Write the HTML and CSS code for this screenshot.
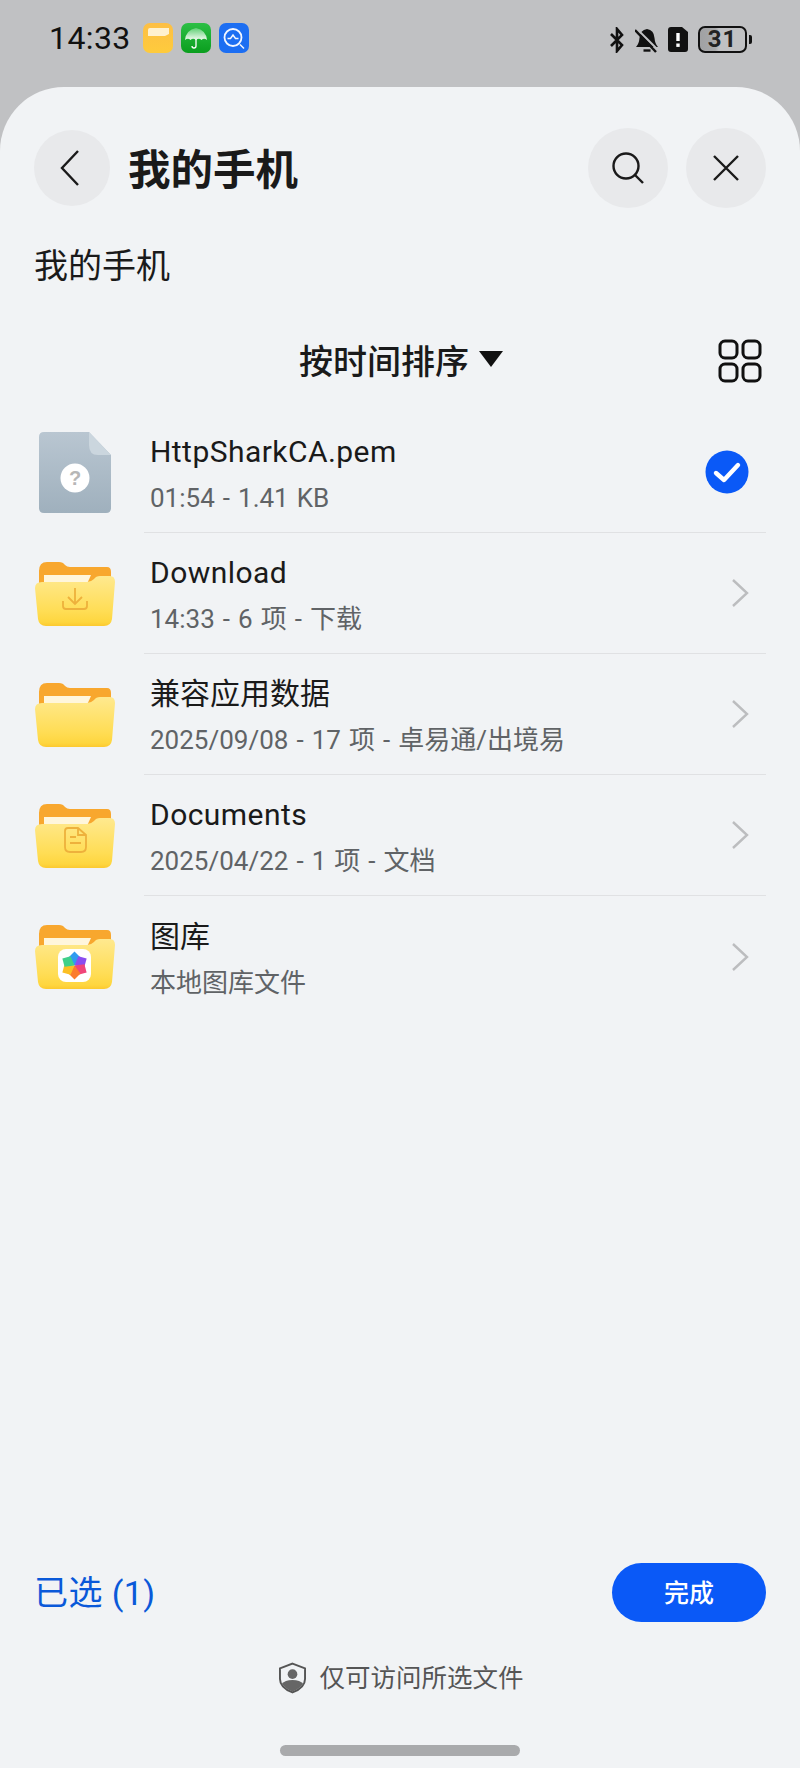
FILE: index.html
```html
<!DOCTYPE html>
<html lang="zh-CN">
<head>
  <meta charset="UTF-8">
  <title>我的手机</title>
  <link rel="stylesheet" href="styles.css">
</head>
<body>
  <svg class="defs" width="0" height="0">
    <defs>
      <linearGradient id="folder-front" x1="0" y1="0" x2="0" y2="1">
        <stop offset="0" stop-color="#ffe98f"/>
        <stop offset="0.7" stop-color="#ffdd55"/>
        <stop offset="0.92" stop-color="#fed63f"/>
        <stop offset="1" stop-color="#fcc92f"/>
      </linearGradient>
      <linearGradient id="file-body" x1="0" y1="0" x2="0" y2="1">
        <stop offset="0" stop-color="#b9c6d1"/>
        <stop offset="1" stop-color="#9fb0bd"/>
      </linearGradient>
      <linearGradient id="app-yellow" x1="0" y1="0" x2="0" y2="1">
        <stop offset="0" stop-color="#fdbf45"/>
        <stop offset="1" stop-color="#fecb3c"/>
      </linearGradient>
      <linearGradient id="app-green" x1="0" y1="0" x2="0" y2="1">
        <stop offset="0" stop-color="#2cbf45"/>
        <stop offset="1" stop-color="#0a9e1e"/>
      </linearGradient>
      <linearGradient id="umbrella" x1="0" y1="0" x2="0" y2="1">
        <stop offset="0" stop-color="#5fcf74"/>
        <stop offset="1" stop-color="#f1fbf1"/>
      </linearGradient>
      <symbol id="folder" viewBox="0 0 80 66">
        <path d="M4 10 Q4 1 12 1 H24 Q28 1 30 4 Q32 6 35 6 H72 Q76 6 76 11 V30 H4 Z" fill="#f8a72e"/>
        <path d="M9 14 H56 L52 23 H9 Z" fill="#fff6dc"/>
        <path d="M7 21 H52 Q56 21 59 18 Q61 15 65 15 H75 Q80 15 80 21 L77 58 Q76 65 69 65 H11 Q4 65 3 58 L0 27 Q0 21 7 21 Z" fill="url(#folder-front)"/>
      </symbol>
    </defs>
  </svg>

  <div class="status-bar">
    <span class="clock">14:33</span>
    <div class="app-icons">
      <svg class="app-icon" viewBox="0 0 30 30">
        <rect width="30" height="30" rx="7" fill="url(#app-yellow)"/>
        <path d="M5 7 Q5 5 7 5 H26 V11 L22 13 H5 Z" fill="#fff1cf"/>
      </svg>
      <svg class="app-icon" viewBox="0 0 30 30">
        <rect width="30" height="30" rx="7" fill="url(#app-green)"/>
        <path d="M4 17 Q5 7 15 5 Q25 7 26 17 Q23 14.5 20.5 17 Q18 14.5 15 17 Q12 14.5 9.5 17 Q7 14.5 4 17 Z" fill="url(#umbrella)"/>
        <path d="M15 16 V23 Q15 25 13 25 Q11 25 11 23" fill="none" stroke="#fff" stroke-width="1.3"/>
      </svg>
      <svg class="app-icon" viewBox="0 0 30 30">
        <rect width="30" height="30" rx="7" fill="#1c6ef2"/>
        <circle cx="14" cy="14.5" r="8.5" fill="none" stroke="#f2f6ff" stroke-width="1.8"/>
        <path d="M21 21.5 L25 25.5 M8.5 15.5 L11.5 15.5 L14 12 L16.5 15.5 L19.5 15.5" fill="none" stroke="#f2f6ff" stroke-width="1.5"/>
      </svg>
    </div>
    <div class="status-right">
      <svg class="bt-icon" viewBox="0 0 16 26">
        <path d="M2 7 L13 18 L8 24 V2 L13 8 L2 19" fill="none" stroke="#111" stroke-width="2.6"/>
      </svg>
      <svg class="bell-icon" viewBox="0 0 24 26">
        <path d="M1 20 Q4 17 4.5 11 Q5 3 12 2 Q19 3 19.5 11 Q20 17 23 20 Z" fill="#111"/>
        <path d="M8.5 23.5 H15.5" stroke="#111" stroke-width="2.4"/>
        <path d="M2 2 L24 24" stroke="#c0c1c3" stroke-width="2"/>
        <path d="M0 3 L21 25" stroke="#111" stroke-width="2.4"/>
      </svg>
      <svg class="sim-icon" viewBox="0 0 20 25">
        <path d="M3 0 H14 L20 5 V22 Q20 25 17 25 H3 Q0 25 0 22 V3 Q0 0 3 0 Z" fill="#111"/>
        <rect x="8.3" y="6" width="3.4" height="8" fill="#fff"/>
        <rect x="8.3" y="16.5" width="3.4" height="3.4" fill="#fff"/>
      </svg>
      <div class="battery">
        <div class="battery-body">31</div>
        <span class="battery-tip"></span>
      </div>
    </div>
  </div>

  <main class="sheet">
    <header class="top-bar">
      <button class="round-btn back-btn">
        <svg width="20" height="36" viewBox="0 0 20 36"><path d="M18 1 L2 18 L18 35" fill="none" stroke="#1a1a1a" stroke-width="2.4"/></svg>
      </button>
      <h1 class="title">我的手机</h1>
      <button class="round-btn">
        <svg width="34" height="34" viewBox="0 0 34 34"><circle cx="15" cy="15" r="12.5" fill="none" stroke="#1a1a1a" stroke-width="2.4"/><path d="M24 24 L32 32" stroke="#1a1a1a" stroke-width="2.4"/></svg>
      </button>
      <button class="round-btn">
        <svg width="28" height="28" viewBox="0 0 28 28"><path d="M2 2 L26 26 M26 2 L2 26" stroke="#1a1a1a" stroke-width="2.4"/></svg>
      </button>
    </header>

    <div class="crumb">我的手机</div>

    <div class="sort-bar">
      <div class="sort">
        <span>按时间排序</span>
        <span class="sort-arrow"></span>
      </div>
      <svg class="grid-icon" width="44" height="44" viewBox="0 0 44 44">
        <g fill="none" stroke="#111" stroke-width="3">
          <rect x="2" y="2" width="17" height="17" rx="5"/>
          <rect x="25" y="2" width="17" height="17" rx="5"/>
          <rect x="2" y="25" width="17" height="17" rx="5"/>
          <rect x="25" y="25" width="17" height="17" rx="5"/>
        </g>
      </svg>
    </div>

    <ul class="file-list">
      <li class="file-row">
        <div class="file-icon">
          <svg class="doc" width="72" height="81" viewBox="0 0 72 81">
            <path d="M5 0 H50 L72 23 V76 Q72 81 67 81 H5 Q0 81 0 76 V5 Q0 0 5 0 Z" fill="url(#file-body)"/>
            <path d="M50 0 L72 23 H59 Q50 23 50 13 Z" fill="#cbd6de"/>
            <circle cx="36" cy="46" r="14.5" fill="#fff"/>
            <text x="36" y="53" class="file-mark">?</text>
          </svg>
        </div>
        <div class="file-body">
          <div class="file-text">
            <div class="file-name latin">HttpSharkCA.pem</div>
            <div class="file-meta">01:54 - 1.41 KB</div>
          </div>
          <svg class="check" width="44" height="44" viewBox="0 0 44 44">
            <circle cx="22" cy="22" r="21.5" fill="#0a59f7"/>
            <path d="M11 23 L19 30 L33 15" fill="none" stroke="#fff" stroke-width="4.4" stroke-linecap="round" stroke-linejoin="round"/>
          </svg>
        </div>
      </li>
      <li class="file-row">
        <div class="file-icon">
          <svg class="folder" viewBox="0 0 80 66">
            <use href="#folder"/>
            <path d="M40 27 V42 M33 36 L40 43 L47 36 M28 40 V45 Q28 48 31 48 H49 Q52 48 52 45 V40" fill="none" stroke="#eeb13c" stroke-width="1.8"/>
          </svg>
        </div>
        <div class="file-body">
          <div class="file-text">
            <div class="file-name latin">Download</div>
            <div class="file-meta">14:33 - 6 项 - 下载</div>
          </div>
          <svg class="chevron" width="18" height="28" viewBox="0 0 18 28"><path d="M2 1 L16 14 L2 27" fill="none" stroke="#bcbdbf" stroke-width="2.4"/></svg>
        </div>
      </li>
      <li class="file-row">
        <div class="file-icon">
          <svg class="folder" viewBox="0 0 80 66"><use href="#folder"/></svg>
        </div>
        <div class="file-body">
          <div class="file-text">
            <div class="file-name">兼容应用数据</div>
            <div class="file-meta">2025/09/08 - 17 项 - 卓易通/出境易</div>
          </div>
          <svg class="chevron" width="18" height="28" viewBox="0 0 18 28"><path d="M2 1 L16 14 L2 27" fill="none" stroke="#bcbdbf" stroke-width="2.4"/></svg>
        </div>
      </li>
      <li class="file-row">
        <div class="file-icon">
          <svg class="folder" viewBox="0 0 80 66">
            <use href="#folder"/>
            <path d="M33 25 H43 L51 32 V44 Q51 49 46 49 H35 Q30 49 30 44 V28 Q30 25 33 25 Z M43 25 V32 H51 M35 34 H41 M35 40 H46" fill="none" stroke="#eeb13c" stroke-width="1.8"/>
          </svg>
        </div>
        <div class="file-body">
          <div class="file-text">
            <div class="file-name latin">Documents</div>
            <div class="file-meta">2025/04/22 - 1 项 - 文档</div>
          </div>
          <svg class="chevron" width="18" height="28" viewBox="0 0 18 28"><path d="M2 1 L16 14 L2 27" fill="none" stroke="#bcbdbf" stroke-width="2.4"/></svg>
        </div>
      </li>
      <li class="file-row">
        <div class="file-icon">
          <svg class="folder" viewBox="0 0 80 66">
            <use href="#folder"/>
            <rect x="23" y="25" width="33" height="33" rx="8" fill="#fff"/>
            <g transform="translate(39.5 41.5)">
              <path d="M0 0 L-6 -8 L0 -14 L6 -8 Z" fill="#2f9bf0"/>
              <path d="M0 0 L-6 -8 L0 -14 L6 -8 Z" fill="#8a4df0" transform="rotate(60)"/>
              <path d="M0 0 L-6 -8 L0 -14 L6 -8 Z" fill="#f0457a" transform="rotate(120)"/>
              <path d="M0 0 L-6 -8 L0 -14 L6 -8 Z" fill="#fb7c2c" transform="rotate(180)"/>
              <path d="M0 0 L-6 -8 L0 -14 L6 -8 Z" fill="#fbbf24" transform="rotate(240)"/>
              <path d="M0 0 L-6 -8 L0 -14 L6 -8 Z" fill="#3fd08a" transform="rotate(300)"/>
            </g>
          </svg>
        </div>
        <div class="file-body no-line">
          <div class="file-text">
            <div class="file-name">图库</div>
            <div class="file-meta">本地图库文件</div>
          </div>
          <svg class="chevron" width="18" height="28" viewBox="0 0 18 28"><path d="M2 1 L16 14 L2 27" fill="none" stroke="#bcbdbf" stroke-width="2.4"/></svg>
        </div>
      </li>
    </ul>

    <div class="spacer"></div>

    <div class="action-bar">
      <span class="picked">已选 (1)</span>
      <button class="done-btn">完成</button>
    </div>

    <div class="notice">
      <svg width="27" height="32" viewBox="0 0 28 32">
        <path d="M14 1 L27 6 V17 Q27 26 14 31 Q1 26 1 17 V6 Z" fill="none" stroke="#555" stroke-width="2"/>
        <circle cx="14" cy="12" r="5" fill="#666"/>
        <path d="M3 22 Q6 18 14 18 Q22 18 25 22 Q22 27 14 30 Q6 27 3 22 Z" fill="#666"/>
      </svg>
      <span>仅可访问所选文件</span>
    </div>

    <div class="home-bar"></div>
  </main>
</body>
</html>
```

FILE: styles.css
```css
* {
  box-sizing: border-box;
}
html, body {
  margin: 0;
  padding: 0;
}
body {
  width: 800px;
  height: 1768px;
  overflow: hidden;
  display: flex;
  flex-direction: column;
  background-color: #c0c1c3;
  font-family: Roboto, "Noto Sans CJK SC", sans-serif;
  color: #1a1a1a;
}
.defs {
  display: block;
  height: 0;
}

/* status bar */
.status-bar {
  height: 87px;
  flex: none;
  display: flex;
  align-items: flex-start;
  padding: 0 50px 0 49px;
}
.clock {
  font-size: 32px;
  letter-spacing: 0.4px;
  line-height: 38px;
  margin-top: 19px;
  color: #111;
}
.app-icons {
  display: flex;
  gap: 8px;
  margin: 23px 0 0 12px;
}
.app-icon {
  width: 30px;
  height: 30px;
}
.status-right {
  margin-left: auto;
  margin-right: -2px;
  margin-top: 26px;
  display: flex;
  align-items: center;
  height: 27px;
}
.bt-icon {
  width: 16px;
  height: 26px;
  margin-right: 10px;
}
.bell-icon {
  width: 24px;
  height: 26px;
  margin-right: 9px;
}
.sim-icon {
  width: 20px;
  height: 25px;
  margin-right: 10px;
}
.battery {
  display: flex;
  align-items: center;
  gap: 2px;
}
.battery-body {
  width: 49px;
  height: 27px;
  border: 2px solid #111;
  border-radius: 7px;
  background: linear-gradient(90deg, #a0a1a3 0, #a8a9ab 34%, #c0c1c3 42%);
  font-size: 24px;
  font-weight: 700;
  letter-spacing: 1px;
  line-height: 23px;
  text-align: center;
  color: #222;
}
.battery-tip {
  width: 3px;
  height: 9px;
  border-radius: 0 2px 2px 0;
  background-color: #111;
}

/* sheet */
.sheet {
  flex: 1;
  display: flex;
  flex-direction: column;
  background-color: #f1f3f5;
  border-radius: 64px 64px 0 0;
  padding: 0 34px;
}
.top-bar {
  display: flex;
  align-items: center;
  gap: 18px;
  margin-top: 41px;
}
.round-btn {
  width: 80px;
  height: 80px;
  flex: none;
  border: 0;
  padding: 0;
  border-radius: 50%;
  background-color: #e8e9eb;
  display: flex;
  align-items: center;
  justify-content: center;
}
.back-btn {
  width: 76px;
  height: 76px;
  padding-right: 4px;
}
.title {
  flex: 1;
  margin: 6px 0 0 0;
  font-size: 42.5px;
  font-weight: 700;
  line-height: 56px;
}
.crumb {
  margin-top: 34px;
  font-size: 34px;
  line-height: 48px;
}
.sort-bar {
  position: relative;
  display: flex;
  justify-content: center;
  align-items: center;
  height: 44px;
  margin-top: 47px;
}
.sort {
  display: flex;
  align-items: center;
  gap: 10px;
  font-size: 34px;
  font-weight: 500;
  margin-left: 2px;
}
.sort-arrow {
  width: 0;
  height: 0;
  border-left: 12px solid transparent;
  border-right: 12px solid transparent;
  border-top: 16px solid #111;
}
.grid-icon {
  position: absolute;
  right: 4px;
  top: 2px;
}

/* list */
.file-list {
  list-style: none;
  margin: 31px 0 0 0;
  padding: 0;
}
.file-row {
  display: flex;
  height: 121px;
}
.file-icon {
  width: 110px;
  flex: none;
  display: flex;
  align-items: center;
}
.doc {
  margin-left: 5px;
}
.folder {
  width: 80px;
  height: 66px;
  margin-left: 1px;
}
.file-mark {
  font-family: "Liberation Sans", sans-serif;
  font-size: 20px;
  font-weight: 700;
  text-anchor: middle;
  fill: #b7b7b7;
}
.file-body {
  flex: 1;
  display: flex;
  align-items: center;
  justify-content: space-between;
  padding: 0 17px 0 6px;
  border-bottom: 1px solid #e0e1e3;
}
.no-line {
  border-bottom: 0;
}
.file-text {
  padding-top: 2px;
}
.file-name {
  font-size: 30px;
  line-height: 42px;
  color: #1a1a1a;
}
.latin {
  letter-spacing: 0.45px;
}
.file-meta {
  margin-top: 8px;
  font-size: 26px;
  word-spacing: 1.6px;
  line-height: 34px;
  color: #606366;
}

.spacer {
  flex: 1;
}

/* bottom */
.action-bar {
  display: flex;
  align-items: center;
  justify-content: space-between;
}
.picked {
  font-size: 34px;
  letter-spacing: 0.4px;
  color: #0a59d9;
  margin-bottom: 5px;
}
.done-btn {
  width: 154px;
  height: 59px;
  border: 0;
  border-radius: 30px;
  padding: 0 0 4px;
  background-color: #0a59f7;
  color: #fff;
  font-family: inherit;
  font-size: 25px;
  font-weight: 500;
}
.notice {
  display: flex;
  justify-content: center;
  align-items: center;
  gap: 13px;
  margin-top: 38px;
  margin-left: 3px;
  font-size: 25.5px;
  line-height: 36px;
  color: #555;
}
.home-bar {
  width: 240px;
  height: 11px;
  border-radius: 6px;
  background-color: #a9aaac;
  margin: 49px auto 12px;
}
```
